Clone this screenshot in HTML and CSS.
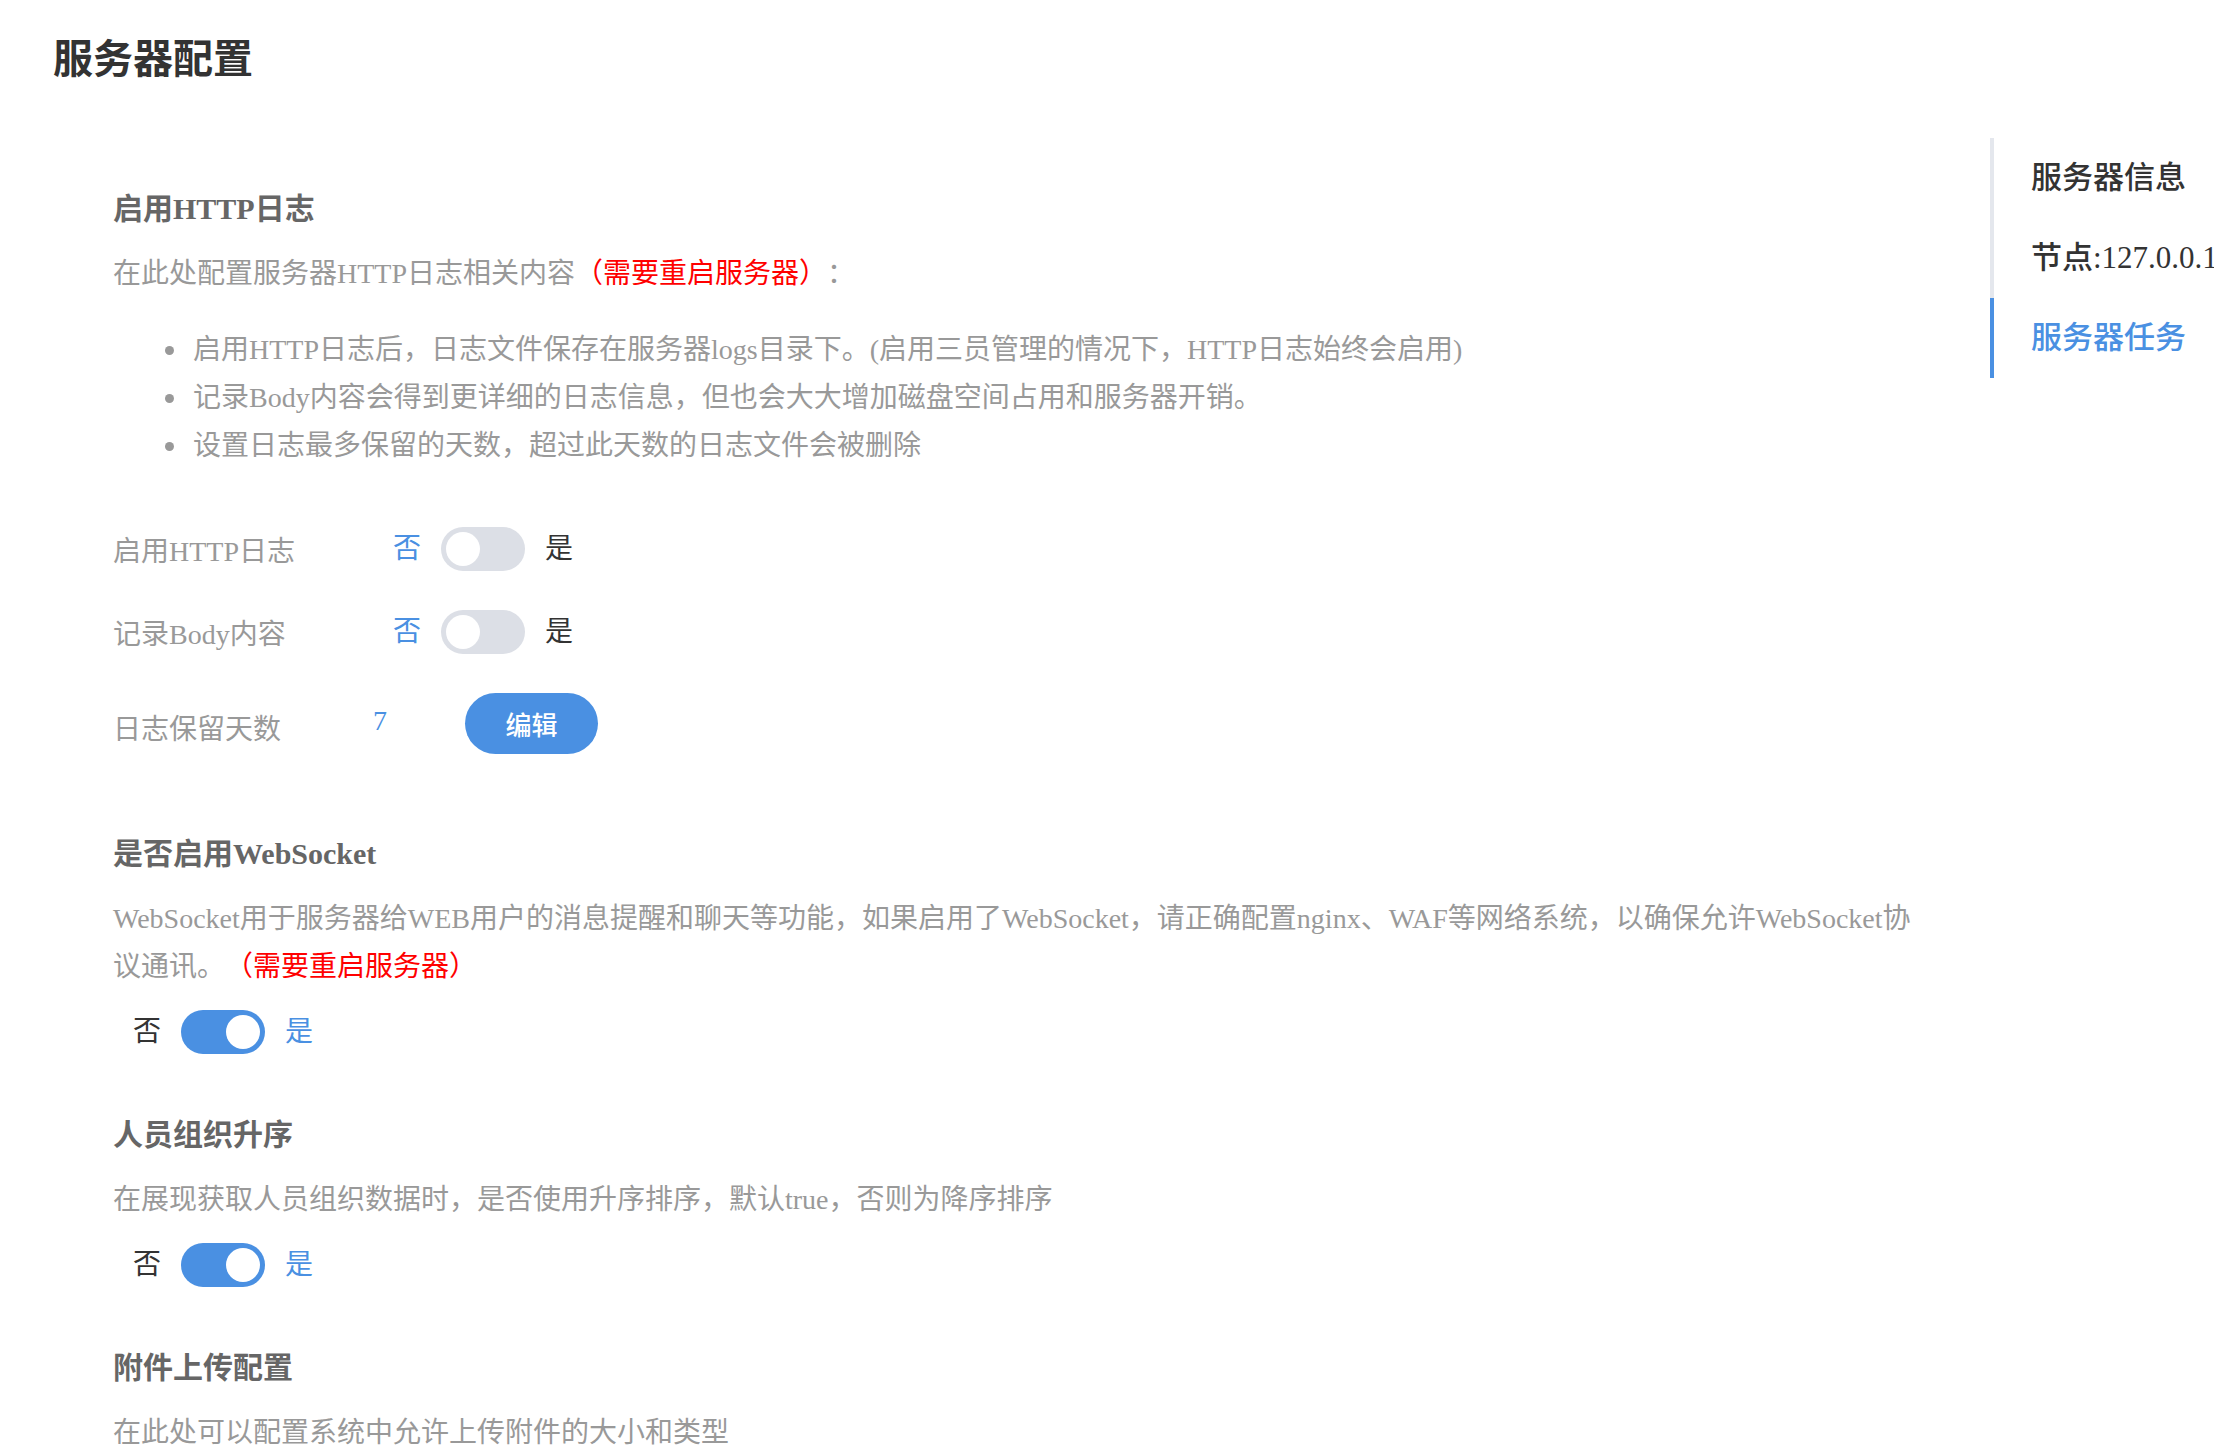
FILE: index.html
```html
<!DOCTYPE html>
<html lang="zh-CN">
<head>
    <meta charset="UTF-8">
    <title>服务器配置</title>
    <link rel="stylesheet" href="styles.css">
</head>
<body>
    <div class="layout">
        <div class="main">
            <h1 class="page-title">服务器配置</h1>

            <div class="settings">
                <!-- HTTP log -->
                <div class="section section-http">
                    <h2 class="section-title">启用HTTP日志</h2>
                    <p class="section-desc">在此处配置服务器HTTP日志相关内容<span class="warn">（需要重启服务器）</span>：</p>
                    <ul class="tips">
                        <li>启用HTTP日志后，日志文件保存在服务器logs目录下。(启用三员管理的情况下，HTTP日志始终会启用)</li>
                        <li>记录Body内容会得到更详细的日志信息，但也会大大增加磁盘空间占用和服务器开销。</li>
                        <li>设置日志最多保留的天数，超过此天数的日志文件会被删除</li>
                    </ul>
                    <div class="form">
                        <div class="form-row">
                            <span class="form-label">启用HTTP日志</span>
                            <div class="switch-group">
                                <span class="switch-text active">否</span>
                                <span class="switch"><span class="knob"></span></span>
                                <span class="switch-text">是</span>
                            </div>
                        </div>
                        <div class="form-row">
                            <span class="form-label">记录Body内容</span>
                            <div class="switch-group">
                                <span class="switch-text active">否</span>
                                <span class="switch"><span class="knob"></span></span>
                                <span class="switch-text">是</span>
                            </div>
                        </div>
                        <div class="form-row form-row-tall">
                            <span class="form-label">日志保留天数</span>
                            <span class="form-value">7</span>
                            <button class="btn">编辑</button>
                        </div>
                    </div>
                </div>

                <!-- websocket -->
                <div class="section">
                    <h2 class="section-title">是否启用WebSocket</h2>
                    <p class="section-desc">WebSocket用于服务器给WEB用户的消息提醒和聊天等功能，如果启用了WebSocket，请正确配置nginx、WAF等网络系统，以确保允许WebSocket协议通讯。<span class="warn">（需要重启服务器）</span></p>
                    <div class="switch-group switch-line">
                        <span class="switch-text">否</span>
                        <span class="switch on"><span class="knob"></span></span>
                        <span class="switch-text active">是</span>
                    </div>
                </div>

                <!-- org order -->
                <div class="section">
                    <h2 class="section-title">人员组织升序</h2>
                    <p class="section-desc">在展现获取人员组织数据时，是否使用升序排序，默认true，否则为降序排序</p>
                    <div class="switch-group switch-line">
                        <span class="switch-text">否</span>
                        <span class="switch on"><span class="knob"></span></span>
                        <span class="switch-text active">是</span>
                    </div>
                </div>

                <!-- attachments -->
                <div class="section">
                    <h2 class="section-title">附件上传配置</h2>
                    <p class="section-desc">在此处可以配置系统中允许上传附件的大小和类型</p>
                </div>
            </div>
        </div>

        <div class="side">
            <ul class="side-nav">
                <li>服务器信息</li>
                <li>节点:127.0.0.1</li>
                <li class="active">服务器任务</li>
            </ul>
        </div>
    </div>
</body>
</html>
```

FILE: styles.css
```css
body {
    margin: 0;
    background: #fff;
    font-family: "Liberation Serif", "Noto Sans CJK SC", serif;
    color: #333;
    overflow: hidden;
    text-spacing-trim: space-all;
}

.layout {
    display: flex;
}

.main {
    flex: 1;
    min-width: 0;
}

.page-title {
    margin: 0;
    padding: 30px 0 0 53px;
    font-size: 40px;
    line-height: 60px;
    font-weight: bold;
    color: #333;
}

.settings {
    padding: 97px 77px 0 113px;
}

.section {
    margin-bottom: 59px;
}

.section-title {
    margin: 0 0 19px;
    font-size: 30px;
    line-height: 44px;
    font-weight: 600;
    color: #666;
}

.section-desc {
    margin: 0;
    font-size: 28px;
    line-height: 48px;
    color: #999;
}

.warn {
    color: #ff0000;
}

.tips {
    list-style: none;
    margin: 28px 0 0;
    padding: 0 0 0 52px;
    font-size: 28px;
    line-height: 48px;
    color: #999;
}

.tips li {
    display: flex;
    align-items: center;
}

.tips li::before {
    content: "";
    flex: none;
    width: 9px;
    height: 9px;
    margin-right: 19px;
    border-radius: 50%;
    background-color: #999;
}

.form {
    margin-top: 37px;
}

.form-row {
    display: flex;
    align-items: center;
    height: 83px;
}

.form-row-tall {
    height: 100px;
}

.form-label {
    width: 260px;
    font-size: 28px;
    color: #999;
}

.form-row-tall .form-label {
    padding-top: 8px;
}

.form-row .switch-group {
    padding-left: 20px;
}

.form-value {
    width: 92px;
    font-size: 28px;
    color: #4a90e2;
    margin-top: -4px;
}

.btn {
    width: 133px;
    height: 61px;
    padding: 0;
    border: none;
    border-radius: 31px;
    background-color: #4a90e2;
    color: #fff;
    font-family: "Noto Sans CJK SC", sans-serif;
    font-size: 26px;
    font-weight: 500;
    cursor: pointer;
}

.switch-group {
    display: flex;
    align-items: center;
    gap: 20px;
}

.switch-line {
    margin-top: 19px;
    padding-left: 20px;
}

.switch-text {
    font-size: 28px;
    line-height: 44px;
    color: #333;
}

.switch-text.active {
    color: #4a90e2;
}

.switch {
    display: flex;
    align-items: center;
    width: 84px;
    height: 44px;
    padding: 0 5px;
    box-sizing: border-box;
    border-radius: 22px;
    background-color: #dcdfe6;
    cursor: pointer;
}

.switch.on {
    justify-content: flex-end;
    background-color: #4a90e2;
}

.knob {
    width: 34px;
    height: 34px;
    border-radius: 50%;
    background-color: #fff;
}

.side {
    width: 224px;
    flex: none;
    padding-top: 138px;
}

.side-nav {
    list-style: none;
    margin: 0;
    padding: 0;
    border-left: 4px solid #e4e7ed;
}

.side-nav li {
    height: 80px;
    line-height: 80px;
    margin-left: -4px;
    padding-left: 37px;
    border-left: 4px solid transparent;
    font-size: 31px;
    font-weight: 500;
    color: #333;
    white-space: nowrap;
}

.side-nav li.active {
    border-left-color: #4a90e2;
    color: #4a90e2;
}
```
